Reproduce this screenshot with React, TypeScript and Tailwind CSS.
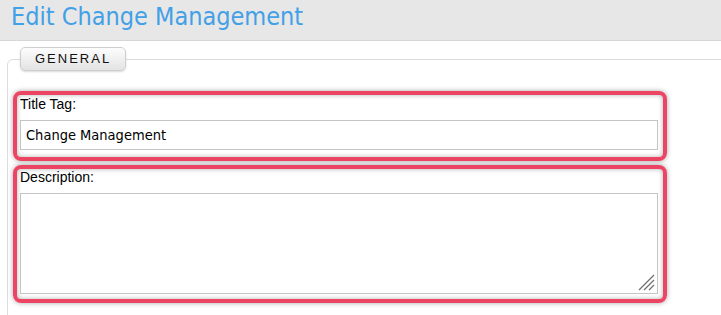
export default function App() {
  return (
    <div className="min-h-[315px] w-full overflow-hidden bg-white">
      <div className="h-[41px] border-b border-[#d6d6d6] bg-[#e7e7e7] pl-[11px]">
        <h1 className="font-['DejaVu_Sans_Condensed','DejaVu_Sans',sans-serif] text-[25px] leading-[34px] text-[#42a0e6]">
          Edit Change Management
        </h1>
      </div>
      <fieldset className="-mr-[40px] ml-[7px] mt-[6px] rounded-tl-[6px] border border-[#dcdcdc] pb-[20px] pl-[5px] pt-[20px]">
        <legend className="ml-[7px] h-[24px] rounded-[5px] border border-[#cfcfcf] bg-gradient-to-b from-[#fdfdfd] to-[#e3e3e3] px-[14px] font-['Liberation_Sans',Arial,sans-serif] text-[13px] leading-[22px] tracking-[2px] text-[#111] shadow-[0_1px_2px_rgba(0,0,0,0.15)]">
          GENERAL
        </legend>
        <div className="flex w-[654px] flex-col gap-[4px]">
          <div className="rounded-[8px] border-[4px] border-[#ec4463] pb-[7px] pl-[3px] pr-[5px] pt-[1px] shadow-[0_0_5px_rgba(0,0,0,0.35),inset_0_0_5px_rgba(0,0,0,0.3)]">
            <label className="mb-[8px] block font-['Liberation_Sans',Arial,sans-serif] text-[14px] leading-[16px] text-black">
              Title Tag:
            </label>
            <input
              readOnly
              value="Change Management"
              className="block h-[30px] w-full border border-[#c4c4c4] bg-white pl-[5px] font-['DejaVu_Sans_Condensed','DejaVu_Sans',sans-serif] text-[14.5px] text-black outline-none"
            />
          </div>
          <div className="rounded-[8px] border-[4px] border-[#ec4463] pb-[5px] pl-[3px] pr-[5px] shadow-[0_0_5px_rgba(0,0,0,0.35),inset_0_0_5px_rgba(0,0,0,0.3)]">
            <label className="mb-[8px] block font-['Liberation_Sans',Arial,sans-serif] text-[14px] leading-[16px] text-black">
              Description:
            </label>
            <div className="relative">
              <textarea
                readOnly
                className="block h-[101px] w-full resize-none border border-[#c4c4c4] bg-white font-['DejaVu_Sans_Condensed','DejaVu_Sans',sans-serif] text-[15px] outline-none"
              />
              <svg
                className="pointer-events-none absolute bottom-[3px] right-[3px]"
                width="17"
                height="17"
                viewBox="0 0 17 17"
              >
                <g stroke="#6f6f6f" strokeWidth="1.2">
                  <line x1="1" y1="16" x2="16" y2="1" />
                  <line x1="6" y1="16" x2="16" y2="6" />
                  <line x1="11" y1="16" x2="16" y2="11" />
                </g>
              </svg>
            </div>
          </div>
        </div>
      </fieldset>
    </div>
  );
}
